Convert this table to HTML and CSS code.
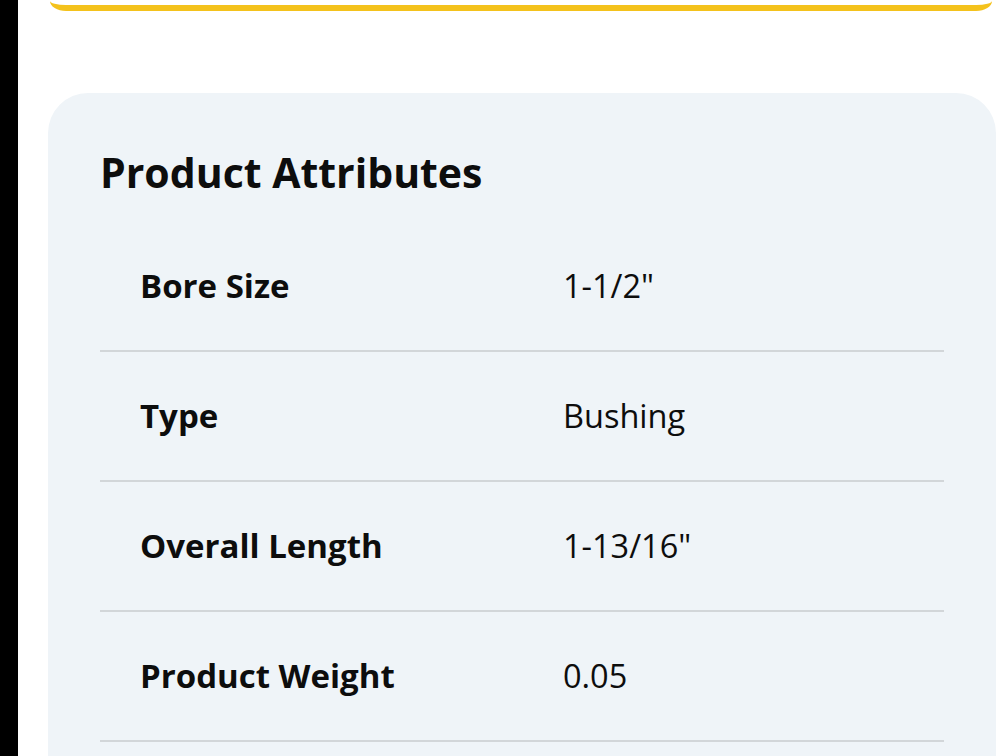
FILE: index.html
```html
<!DOCTYPE html>
<html lang="en">

<head>
    <meta charset="UTF-8">
    <meta name="viewport" content="width=device-width, initial-scale=1.0">
    <title>Product Attributes</title>
    <link rel="stylesheet" href="styles.css">
</head>

<body>
    <div class="side"></div>

    <div class="main">
        <div class="topbar"></div>

        <div class="card">
            <h2 class="title">Product Attributes</h2>

            <div class="row">
                <div class="label">Bore Size</div>
                <div class="value">1-1/2"</div>
            </div>
            <div class="row">
                <div class="label">Type</div>
                <div class="value">Bushing</div>
            </div>
            <div class="row">
                <div class="label">Overall Length</div>
                <div class="value">1-13/16"</div>
            </div>
            <div class="row">
                <div class="label">Product Weight</div>
                <div class="value">0.05</div>
            </div>
        </div>
    </div>
</body>

</html>
```
FILE: styles.css
```css
* {
    padding: 0;
    margin: 0;
    box-sizing: border-box;
}

html,
body {
    height: 100%;
}

body {
    display: flex;
    background: #fff;
    font-family: "Open Sans", "Noto Sans", sans-serif;
    color: #0d0d0d;
    overflow: hidden;
}

.side {
    width: 18px;
    flex-shrink: 0;
    background: #000;
}

.main {
    flex: 1;
}

.topbar {
    height: 30px;
    margin: -19px 16px 0 32px;
    border-bottom: 6px solid #f4c21c;
    border-radius: 0 0 16px 16px / 0 0 10px 10px;
}

.card {
    margin: 82px 12px 0 30px;
    padding: 52px 52px 60px 52px;
    background: #eff4f8;
    border-radius: 40px;
}

.title {
    font-size: 41px;
    line-height: 54px;
    font-weight: 700;
    margin-bottom: 23px;
}

.row {
    display: flex;
    align-items: center;
    height: 130px;
    padding-left: 40px;
    border-bottom: 2px solid #d2d6d9;
    font-size: 32.5px;
    line-height: 44px;
}

.label {
    width: 423px;
    font-size: 33px;
    font-weight: 700;
}

.value {
    font-weight: 400;
}
```
